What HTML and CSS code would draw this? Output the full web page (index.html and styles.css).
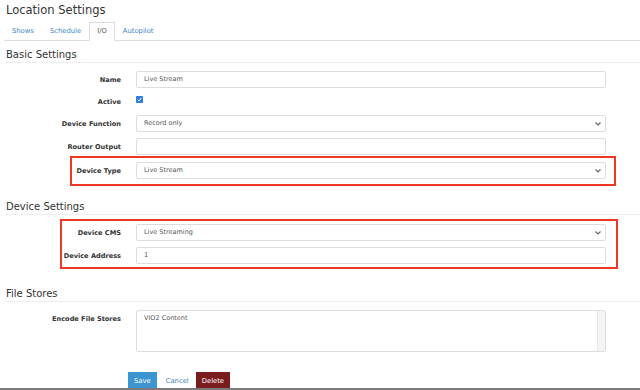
FILE: index.html
```html
<!DOCTYPE html>
<html lang="en">
  <head>
    <meta charset="UTF-8" />
    <meta name="viewport" content="width=device-width, initial-scale=1.0" />
    <title>Location Settings</title>
    <link rel="stylesheet" href="styles.css">
  </head>
  <body>
    <div class="page">
      <h1>Location Settings</h1>
      <ul class="tabs">
        <li><a href="#">Shows</a></li>
        <li><a href="#">Schedule</a></li>
        <li class="active"><a href="#">I/O</a></li>
        <li><a href="#">Autopilot</a></li>
      </ul>

      <h2 class="section-title">Basic Settings</h2>
      <div class="row first">
        <label>Name</label>
        <div class="field">Live Stream</div>
      </div>
      <div class="row check-row">
        <label>Active</label>
        <span class="checkbox">
          <svg width="5" height="5" viewBox="0 0 10 10"><path d="M1.5 5.5 L4 8 L8.5 2" fill="none" stroke="#fff" stroke-width="2"/></svg>
        </span>
      </div>
      <div class="row">
        <label>Device Function</label>
        <div class="field select">Record only
          <svg class="chev" width="6" height="4" viewBox="0 0 6 4"><path d="M0.5 0.5 L3 3 L5.5 0.5" fill="none" stroke="#666" stroke-width="1.2"/></svg>
        </div>
      </div>
      <div class="row last">
        <label>Router Output</label>
        <div class="field"></div>
      </div>
      <div class="highlight type-box">
        <div class="row last">
          <label>Device Type</label>
          <div class="field select">Live Stream
            <svg class="chev" width="6" height="4" viewBox="0 0 6 4"><path d="M0.5 0.5 L3 3 L5.5 0.5" fill="none" stroke="#666" stroke-width="1.2"/></svg>
          </div>
        </div>
      </div>

      <h2 class="section-title device">Device Settings</h2>
      <div class="highlight cms-box">
        <div class="row">
          <label>Device CMS</label>
          <div class="field select">Live Streaming
            <svg class="chev" width="6" height="4" viewBox="0 0 6 4"><path d="M0.5 0.5 L3 3 L5.5 0.5" fill="none" stroke="#666" stroke-width="1.2"/></svg>
          </div>
        </div>
        <div class="row last">
          <label>Device Address</label>
          <div class="field">1</div>
        </div>
      </div>

      <h2 class="section-title stores">File Stores</h2>
      <div class="row area-row">
        <label>Encode File Stores</label>
        <div class="field area">
          <span>VIO2 Content</span>
          <span class="scroll"></span>
        </div>
      </div>

      <div class="buttons">
        <a href="#" class="btn save">Save</a>
        <a href="#" class="cancel">Cancel</a>
        <a href="#" class="btn delete">Delete</a>
      </div>
    </div>
  </body>
</html>
```

FILE: styles.css
```css
* {
  margin: 0;
  padding: 0;
  box-sizing: border-box;
}

body {
  font-family: "DejaVu Sans", Verdana, sans-serif;
  background: #ffffff;
  color: #333333;
}

.page {
  height: 390px;
  overflow: hidden;
  padding: 0 0 0 6px;
  border-bottom: 2px solid #7b7b7b;
}

h1 {
  font-size: 11.5px;
  font-weight: normal;
  line-height: 20px;
  color: #333333;
}

/* Tabs */
.tabs {
  list-style: none;
  display: flex;
  margin: 2px 0 0 -2px;
  height: 19px;
  border-bottom: 1px solid #dddddd;
}

.tabs li {
  height: 19px;
  border: 1px solid transparent;
  border-bottom: none;
}

.tabs a {
  display: block;
  padding: 0 7px;
  line-height: 17px;
  font-size: 6.8px;
  color: #3b87c8;
  text-decoration: none;
}

.tabs li.active {
  border-color: #dddddd;
  background: #ffffff;
  margin-bottom: -1px;
  height: 19px;
}

.tabs li.active a {
  color: #555555;
}

/* Section titles */
.section-title {
  font-size: 10px;
  font-weight: normal;
  line-height: 15px;
  padding-top: 6px;
  border-bottom: 1px solid #eeeeee;
  color: #333333;
}

.section-title.device {
  padding-top: 13px;
}

.section-title.stores {
  padding-top: 17px;
}

/* Rows */
.row {
  display: grid;
  grid-template-columns: 115px 470px;
  column-gap: 15px;
  align-items: center;
  margin-bottom: 6px;
}

.row.first {
  margin-top: 8px;
}

.row.last {
  margin-bottom: 0;
}

.row label {
  text-align: right;
  font-size: 6.6px;
  font-weight: bold;
  color: #333333;
}

.check-row {
  height: 15px;
}

.checkbox {
  display: flex;
  align-items: center;
  justify-content: center;
  width: 7px;
  height: 7px;
  border-radius: 1px;
  background: #2f7de1;
  margin-top: -5px;
}

.field {
  position: relative;
  height: 17px;
  border: 1px solid #dddddd;
  border-radius: 2px;
  background: #ffffff;
  font-size: 6.5px;
  color: #555555;
  line-height: 15px;
  padding: 0 7px;
}

.field .chev {
  position: absolute;
  right: 4px;
  top: 6px;
}

/* Red annotation boxes */
.highlight {
  border: 2px solid #ee3823;
}

.highlight .row {
  margin-left: -66px;
}

.type-box {
  margin: 1px 0 0 64px;
  width: 546px;
  padding: 4px 0 5px;
}

.cms-box {
  margin: 4px 0 0 54px;
  width: 558px;
  padding: 3px 0 3px;
}

.cms-box .row {
  margin-left: -56px;
}

/* Textarea */
.area-row {
  margin-top: 8px;
  align-items: start;
}

.area-row label {
  padding-top: 5px;
}

.field.area {
  height: 42px;
  line-height: 1;
  padding: 4px 7px;
}

.field .scroll {
  position: absolute;
  top: 0;
  right: 0;
  width: 8px;
  height: 100%;
  background: #f4f4f4;
  border-left: 1px solid #e8e8e8;
}

/* Buttons */
.buttons {
  display: flex;
  align-items: center;
  margin: 20px 0 0 122px;
}

.btn {
  display: block;
  height: 19px;
  line-height: 19px;
  padding: 0 6px;
  font-size: 6.8px;
  color: #ffffff;
  text-decoration: none;
}

.save {
  background: #3c95d0;
}

.delete {
  background: #7a1b1d;
}

.cancel {
  font-size: 6.8px;
  color: #3b87c8;
  text-decoration: none;
  padding: 0 7px 0 9px;
  line-height: 19px;
}
```
